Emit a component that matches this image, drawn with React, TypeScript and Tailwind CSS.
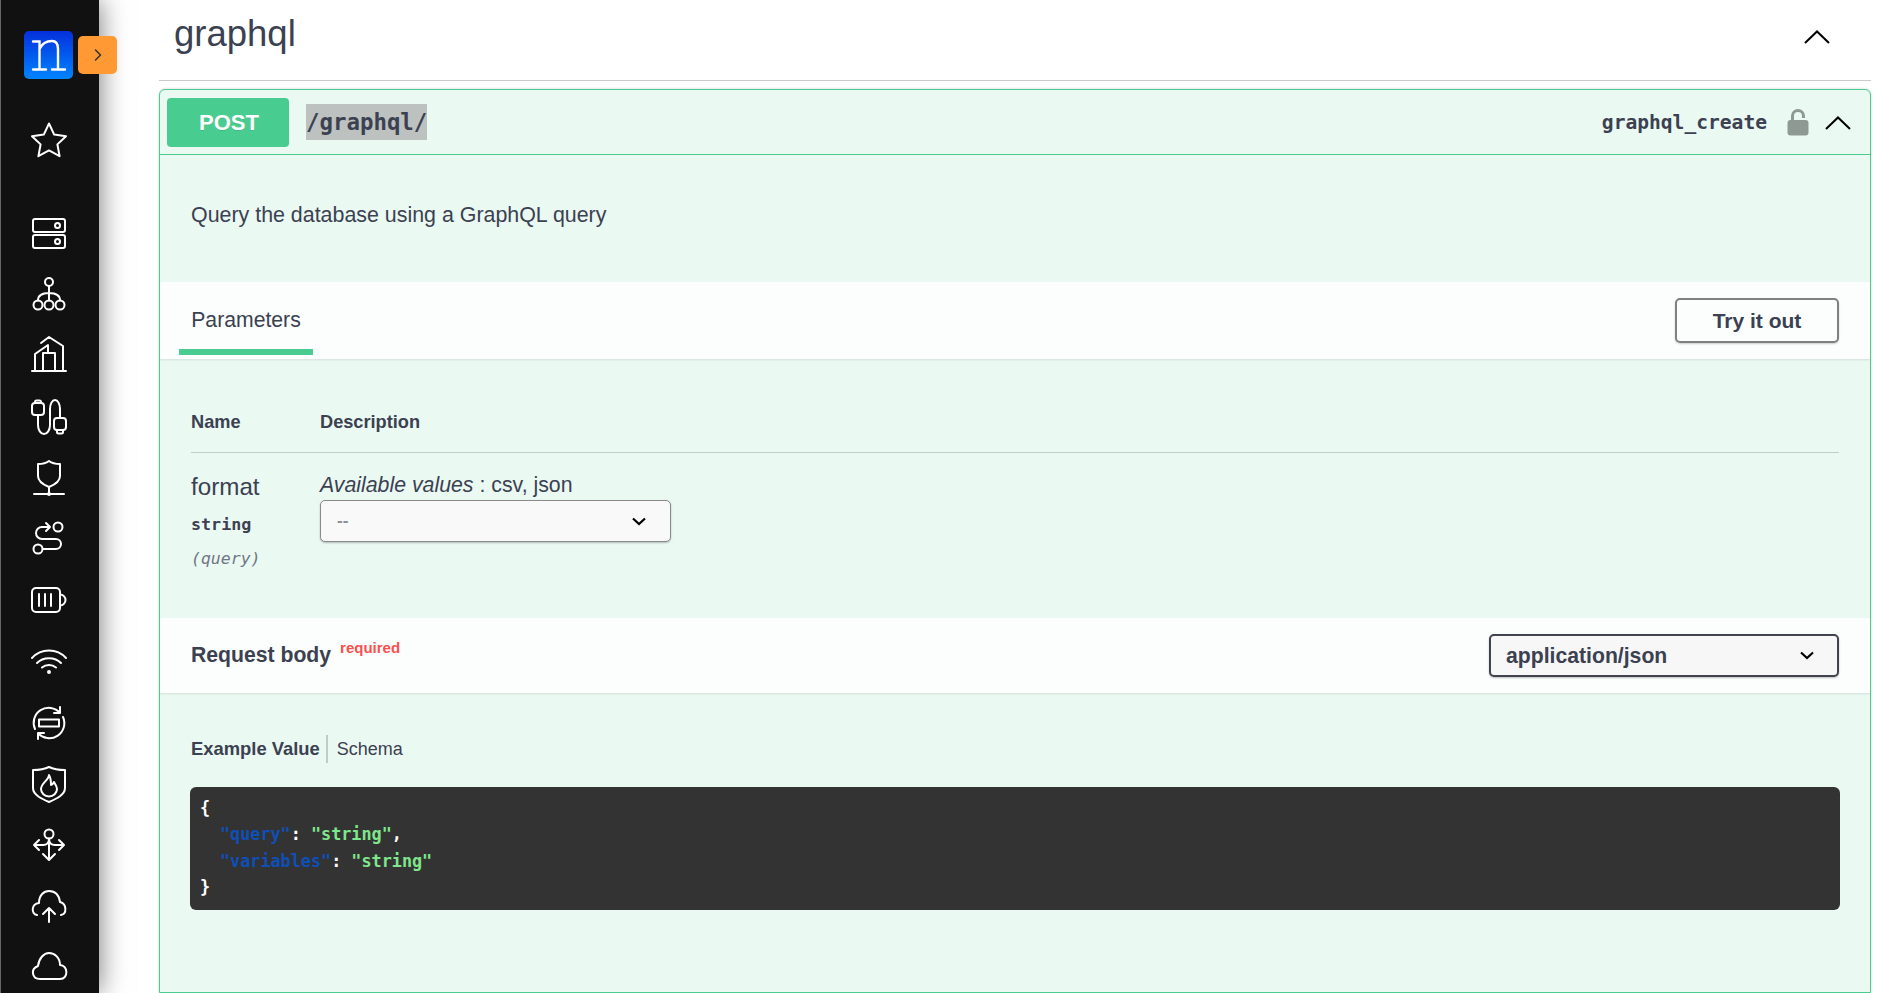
import { ChevronRight } from 'lucide-react'
import type { ReactNode } from 'react'

const sans = "font-['Liberation_Sans',Arial,sans-serif]"
const mono = "font-['DejaVu_Sans_Mono','Liberation_Mono',monospace]"

function NavIcon({ children }: { children: ReactNode }) {
  return (
    <svg
      viewBox="0 0 40 40"
      fill="none"
      stroke="white"
      strokeWidth="2"
      strokeLinecap="round"
      strokeLinejoin="round"
      className="h-10 w-10 shrink-0"
    >
      {children}
    </svg>
  )
}

function Chevron({ className }: { className: string }) {
  return (
    <svg viewBox="0 0 26 14" fill="none" stroke="black" strokeWidth="2" className={className}>
      <path d="M1 13 L13 1.5 L25 13" />
    </svg>
  )
}

function SelectArrow() {
  return (
    <svg viewBox="0 0 14 9" fill="none" stroke="black" strokeWidth="2.2" className="h-[9px] w-[14px]">
      <path d="M1 1.5 L7 7 L13 1.5" />
    </svg>
  )
}

function Sidebar() {
  return (
    <aside className="relative z-10 flex h-[993px] w-[99px] shrink-0 flex-col items-center overflow-visible border-l border-[#666] bg-[#111] pr-[3px] shadow-[0_0_26px_rgba(0,0,0,0.55)]">
      {/* logo */}
      <svg viewBox="0 0 49 48" className="mt-[31px] h-[48px] w-[49px] shrink-0">
        <defs>
          <linearGradient id="logo-bg" x1="0" y1="0" x2="0" y2="1">
            <stop offset="0" stopColor="#0530dc" />
            <stop offset="1" stopColor="#0084ff" />
          </linearGradient>
        </defs>
        <rect width="49" height="48" rx="5" fill="url(#logo-bg)" />
        <path
          d="M9 10.5 H15.5 V38.5 M9 38.5 H22 M15.5 18 C18 12.5 23 10 28 10 C32 10 34 13 34 18 V38.5 M28 38.5 H41"
          fill="none"
          stroke="white"
          strokeWidth="2.4"
          strokeLinecap="round"
        />
      </svg>
      <div className="absolute left-[77px] top-[36px] flex h-[38px] w-[39px] items-center justify-center rounded-[5px] bg-[#ff9933]">
        <ChevronRight size={20} strokeWidth={1.8} className="text-[#333]" />
      </div>

      <div className="mt-[42px]">
        <NavIcon>
          <path d="M20 2.5 L25.2 13.6 L37 15.2 L28.4 23.4 L30.6 35.2 L20 29.4 L9.4 35.2 L11.6 23.4 L3 15.2 L14.8 13.6 Z" />
        </NavIcon>
      </div>

      <div className="mt-[52px] flex flex-col gap-[21.2px]">
        <NavIcon>
          <rect x="4" y="6" width="32" height="13" rx="2" />
          <rect x="4" y="22" width="32" height="13" rx="2" />
          <circle cx="28.5" cy="12.5" r="2.5" />
          <circle cx="28.5" cy="28.5" r="2.5" />
        </NavIcon>
        <NavIcon>
          <circle cx="20" cy="8" r="4" />
          <circle cx="9" cy="31" r="4.5" />
          <circle cx="20" cy="31" r="4.5" />
          <circle cx="31" cy="31" r="4.5" />
          <path d="M20 12 V26.5 M9 26.5 C9 21 13 19 20 19 C27 19 31 21 31 26.5" />
        </NavIcon>
        <NavIcon>
          <path d="M3 36 H37 M6 36 V19 L19 10 V18 M12 8 L20 2 L34 11 V36 M14 36 V18 H26 V36" />
        </NavIcon>
        <NavIcon>
          <rect x="3" y="6" width="12" height="12" rx="3" />
          <path d="M6 6 V5 a1.5 1.5 0 0 1 1.5 -1.5 H10.5 a1.5 1.5 0 0 1 1.5 1.5 V6" />
          <path d="M9 18 V28 a6 9 0 0 0 12 0 V12 a5 9 0 0 1 10 0 V21" />
          <rect x="25" y="21" width="12" height="12" rx="3" />
          <path d="M28 33 V35 a1.5 1.5 0 0 0 1.5 1.5 H32.5 a1.5 1.5 0 0 0 1.5 -1.5 V33" />
        </NavIcon>
        <NavIcon>
          <path d="M9 6 Q16 6 20 3 Q24 6 31 6 V18 C31 23 25 27 20 29 C15 27 9 23 9 18 Z" />
          <path d="M5 36 H35 M20 29 V36" />
          <circle cx="20" cy="36" r="1" fill="white" />
        </NavIcon>
        <NavIcon>
          <circle cx="29" cy="8" r="4.5" />
          <circle cx="9" cy="30" r="4.5" />
          <path d="M21 8 H13 a6 6 0 0 0 0 12 H27 a5 5 0 0 1 0 10 H14 M17 4 L21 8 L17 12" />
        </NavIcon>
        <NavIcon>
          <rect x="3" y="8" width="28" height="24" rx="4" />
          <path d="M31 14.5 a5.5 5.5 0 0 1 0 11 M10 14 V26 M16 14 V26 M22 14 V26" />
        </NavIcon>
        <NavIcon>
          <path d="M3 17 C12 7 28 7 37 17 M8 22 C14 15.5 26 15.5 32 22 M13 26.5 C17 23 23 23 27 26.5" />
          <circle cx="20" cy="31" r="1" fill="white" />
        </NavIcon>
        <NavIcon>
          <path d="M6 26 A15 15 0 0 1 31 10 M31 4 V10 H25 M34 14 A15 15 0 0 1 9 30 M9 36 V30 H15" />
          <path d="M13 16.5 H27 M13 23.5 H27 M13 16.5 H10 V23.5 H13 M27 16.5 H30 V23.5 H27" />
        </NavIcon>
        <NavIcon>
          <path d="M4 6 Q14 6 20 3 Q26 6 36 6 V24 C36 31 27 35 20 38 C13 35 4 31 4 24 Z" />
          <path d="M20 11 C20 16 12 19 12 25 a8 7.5 0 0 0 16 0 C28 22 26 20 25 18 C24 20 23 21 22 21 C22 18 22 14 20 11 Z" />
        </NavIcon>
        <NavIcon>
          <circle cx="20" cy="9" r="4.5" />
          <path d="M20 13.5 V34 M14 29 L20 35 L26 29 M5 20 H14 Q20 20 20 14 M35 20 H26 Q20 20 20 14 M10 15 L5 20 L10 25 M30 15 L35 20 L30 25" />
        </NavIcon>
        <NavIcon>
          <path d="M8 29 C2 28 2 18 10 17 C10 9 15 5 20 5 C26 5 30 9 31 16 C38 18 38 28 32 29 M20 36 V22 M14 28 L20 22 L26 28" />
        </NavIcon>
        <NavIcon>
          <path d="M11 32 C3 32 1 22 9 19 C10 11 15 6 20 6 C26 6 31 11 31 18 C39 18 40 32 31 32 Z" />
        </NavIcon>
      </div>
    </aside>
  )
}

function OperationHeader() {
  return (
    <div className="flex h-[65px] shrink-0 items-center border-b border-[#49cc90] pl-[7px] pr-[19px]">
      <div className="flex h-[49px] w-[122px] items-center justify-center rounded-[4px] bg-[#49cc90] pl-[2px] text-[22px] font-bold text-white [text-shadow:0_1px_0_rgba(0,0,0,0.1)]">
        POST
      </div>
      <span className={`${mono} ml-[17px] bg-[#bdc1bf] text-[22.4px] font-bold leading-[36px] text-[#3b4151]`}>/graphql/</span>
      <span className={`${mono} ml-auto pt-[2px] text-[19.6px] font-semibold text-[#3b4151]`}>graphql_create</span>
      <svg viewBox="0 0 22 28" className="ml-[20px] h-[28px] w-[22px]" fill="#8f9994">
        <path d="M4 13 V8 a7 7 0 0 1 14 0 V10 H15 V8 a4 4 0 0 0 -8 0 V13 Z" />
        <rect x="0.5" y="12" width="21" height="15.5" rx="3" />
      </svg>
      <Chevron className="ml-[16px] mt-[2px] h-[14px] w-[26px]" />
    </div>
  )
}

function ParametersTable() {
  return (
    <div className="h-[259px] shrink-0 pl-[31px] pr-[31px] pt-[47px]">
      <div className="flex h-[47px] border-b border-[#c5cdca] text-[18.2px] font-bold leading-[32px] text-[#3b4151]">
        <div className="w-[129px]">Name</div>
        <div>Description</div>
      </div>
      <div className="flex pt-[17px]">
        <div className="w-[129px] text-[#3b4151]">
          <div className="text-[24.2px] leading-[34px]">format</div>
          <div className={`${mono} mt-[8px] text-[16.7px] font-bold leading-[24px]`}>string</div>
          <div className={`${mono} mt-[11px] text-[16.5px] italic leading-[24px] text-[#6f7684]`}>(query)</div>
        </div>
        <div className="text-[#3b4151]">
          <div className="text-[21.3px] leading-[30px]">
            <i>Available values</i> : csv, json
          </div>
          <div className="flex h-[42px] w-[351px] items-center justify-between rounded-[5px] border border-[#8a8a8a] bg-[#f9f9f9] pl-[16px] pr-[24px] shadow-[0_1px_2px_rgba(0,0,0,0.25)]">
            <span className="text-[17px] font-bold text-[#8a8f99]">--</span>
            <SelectArrow />
          </div>
        </div>
      </div>
    </div>
  )
}

function RequestBody() {
  return (
    <>
      <div className="flex h-[75px] shrink-0 items-center justify-between bg-[#fbfefd] pl-[31px] pr-[31px] shadow-[0_1px_2px_rgba(0,0,0,0.1)]">
        <div className="flex items-start text-[#3b4151]">
          <span className="-mt-[1px] text-[21.2px] font-bold leading-[28px]">Request body</span>
          <span className="-mt-[4px] ml-[9px] text-[15px] font-bold leading-[20px] text-[#f95050]">required</span>
        </div>
        <div className="flex h-[43px] w-[350px] items-center justify-between rounded-[5px] border-2 border-[#41444e] bg-[#f7f7f7] pl-[15px] pr-[23px] shadow-[0_1px_2px_rgba(0,0,0,0.25)]">
          <span className="text-[21.2px] font-bold text-[#3b4151]">application/json</span>
          <SelectArrow />
        </div>
      </div>

      <div className="pl-[30px] pr-[30px] pt-[42px]">
        <div className="flex h-[28px] items-center text-[#3b4151]">
          <span className="pl-px text-[18.4px] font-bold">Example Value</span>
          <span className="ml-[6px] h-[28px] w-[2px] bg-[#c3cbc8]" />
          <span className="ml-[9px] text-[18px]">Schema</span>
        </div>
        <div className={`${mono} mt-[24px] h-[123px] rounded-[6px] bg-[#333] pl-[10px] pt-[8px] text-[16.8px] font-bold leading-[26.3px] text-white`}>
          <div>{'{'}</div>
          <div className="pl-[20px]">
            <span className="text-[#0f4fb8]">"query"</span>: <span className="text-[#7fe68a]">"string"</span>,
          </div>
          <div className="pl-[20px]">
            <span className="text-[#0f4fb8]">"variables"</span>: <span className="text-[#7fe68a]">"string"</span>
          </div>
          <div>{'}'}</div>
        </div>
      </div>
    </>
  )
}

export default function App() {
  return (
    <div className={`${sans} flex h-[993px] overflow-hidden bg-white`}>
      <Sidebar />
      <main className="flex min-w-0 flex-1 flex-col pl-[60px] pr-[14px]">
        <div className="flex h-[81px] shrink-0 items-center justify-between border-b border-[#c8c9cd] pb-[12px] pl-[15px] pr-[41px]">
          <h3 className="text-[36.5px] leading-[44px] text-[#3b4151]">graphql</h3>
          <Chevron className="mt-[6px] h-[14px] w-[26px]" />
        </div>

        <section className="mt-[8px] flex flex-1 flex-col overflow-hidden rounded-t-[6px] border border-[#49cc90] bg-[#ebf9f3] shadow-[0_0_3px_rgba(0,0,0,0.19)]">
          <OperationHeader />
          <div className="h-[127px] shrink-0 pl-[31px] pt-[45px] text-[21.4px] leading-[30px] text-[#3b4151]">
            Query the database using a GraphQL query
          </div>
          <div className="flex h-[77px] shrink-0 items-stretch justify-between bg-[#fbfefd] pl-[19px] pr-[31px] shadow-[0_1px_2px_rgba(0,0,0,0.1)]">
            <div className="mb-[4px] flex w-[134px] items-center justify-center border-b-[6px] border-[#49cc90] pt-[9px] text-[21.2px] text-[#3b4151]">
              Parameters
            </div>
            <div className="flex items-center">
              <div className="flex h-[45px] w-[164px] items-center justify-center rounded-[5px] border-2 border-[#808080] pt-[1px] text-[21px] font-bold text-[#3b4151] shadow-[0_1px_2px_rgba(0,0,0,0.2)]">
                Try it out
              </div>
            </div>
          </div>
          <ParametersTable />
          <RequestBody />
        </section>
      </main>
    </div>
  )
}
